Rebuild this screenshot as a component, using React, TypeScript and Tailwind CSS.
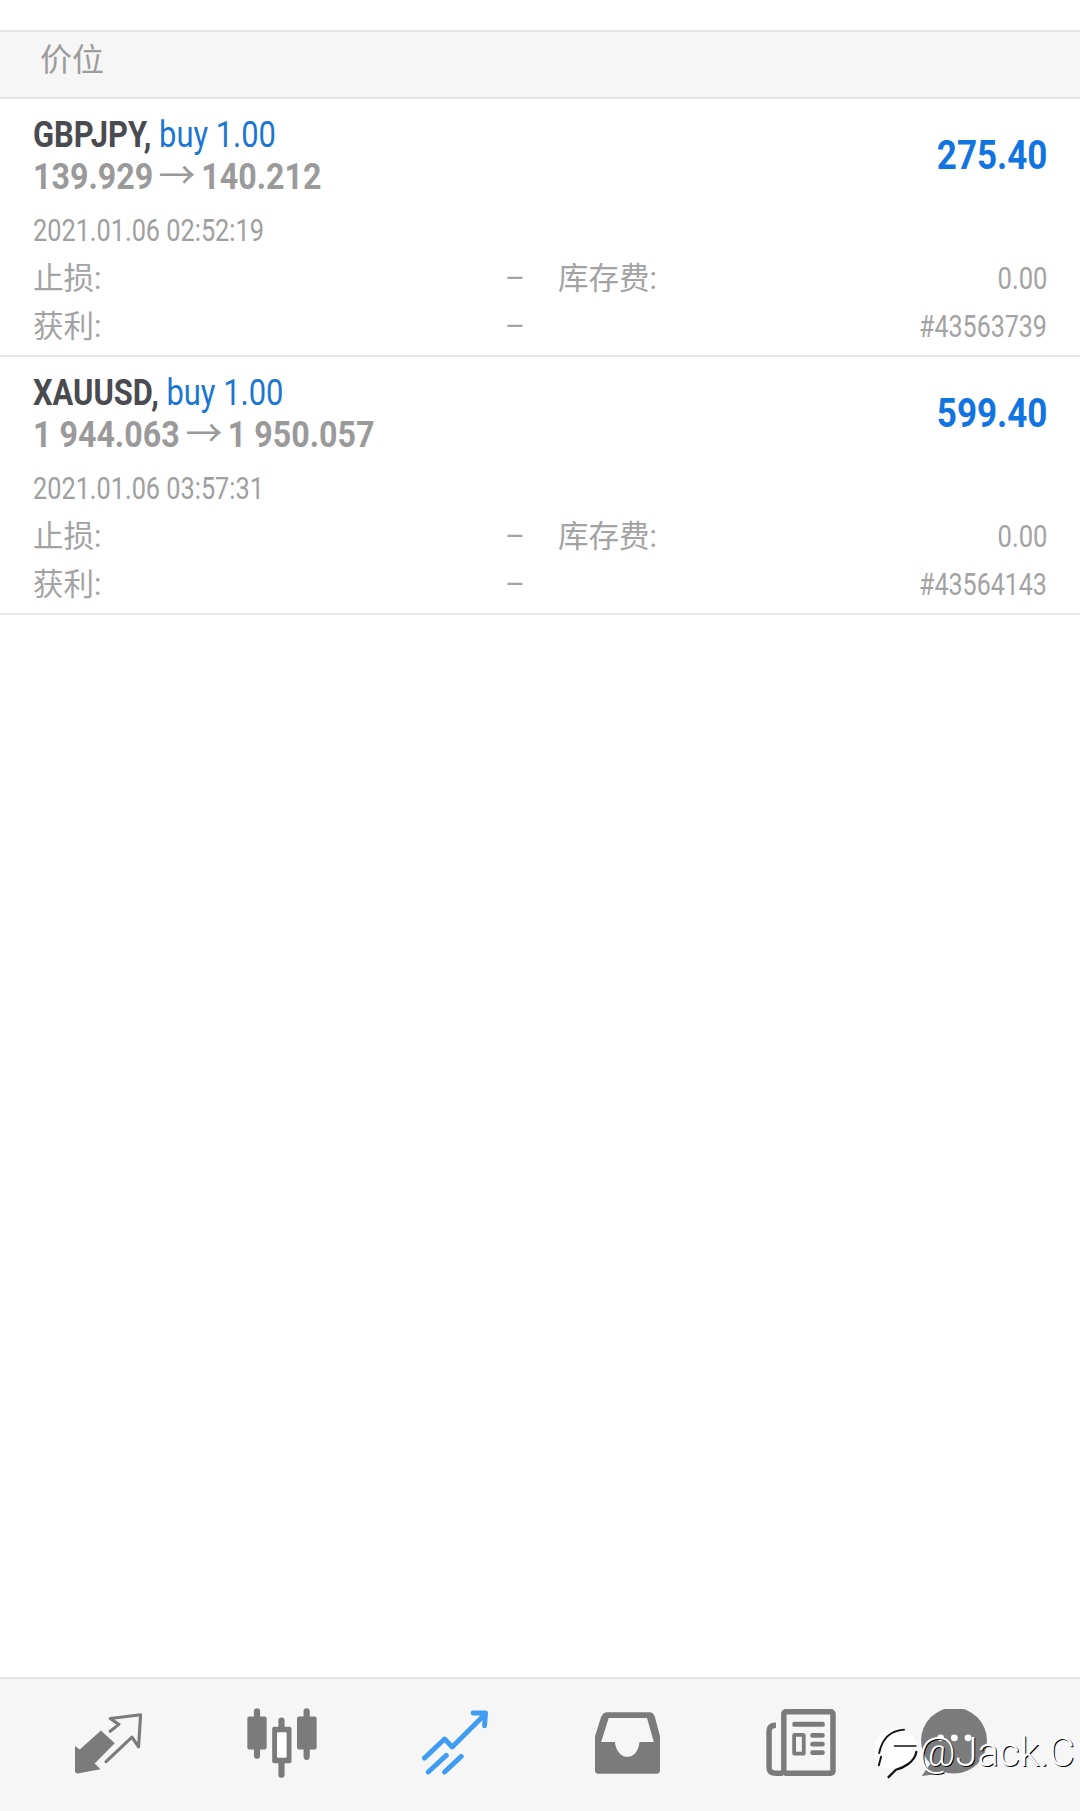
const NAV_GRAY = '#7b7b7b';
const BAR_BG = '#f6f6f6';

const TradeIcon = () => (
  <svg width="67" height="62" viewBox="218 160 194 178">
    <path d="M218 258 L232 268 L293 213 L333 250 L275 308 L292 325 L225 337 Q218 337 218 330 Z" fill={NAV_GRAY} />
    <path d="M308 303 L383 232 L402 260 L408 167 L320 178 L345 195 L320 215" fill="none" stroke={NAV_GRAY} strokeWidth="9" strokeLinejoin="round" strokeLinecap="round" />
  </svg>
);

const CandlesIcon = () => (
  <svg width="70" height="70" viewBox="715 148 203 202">
    <rect x="735" y="148" width="18" height="147" rx="9" fill={NAV_GRAY} />
    <rect x="716" y="172" width="56" height="96" rx="6" fill={NAV_GRAY} />
    <rect x="806" y="175" width="18" height="175" rx="9" fill={NAV_GRAY} />
    <rect x="788" y="202" width="56" height="106" rx="6" fill={NAV_GRAY} />
    <rect x="802" y="218" width="28" height="74" rx="3" fill="#fff" />
    <rect x="879" y="148" width="18" height="150" rx="9" fill={NAV_GRAY} />
    <rect x="860" y="172" width="57" height="96" rx="6" fill={NAV_GRAY} />
  </svg>
);

const PositionsIcon = () => (
  <svg width="66" height="65" viewBox="1225 152 190 186">
    <g fill="none" stroke="#3f9cf3" strokeWidth="14" strokeLinecap="round" strokeLinejoin="round">
      <path d="M1232 290 L1290 235 L1312 258 L1405 165" />
      <path d="M1372 160 L1408 160 L1405 197" />
      <path d="M1243 330 L1295 282" />
      <path d="M1290 330 L1338 285" />
    </g>
  </svg>
);

const InboxIcon = () => (
  <svg width="65" height="62" viewBox="160 155 190 180">
    <path
      fillRule="evenodd"
      fill={NAV_GRAY}
      d="M195 155 H320 Q330 155 335 168 L350 225 V325 Q350 335 340 335 H170 Q160 335 160 325 V225 L178 168 Q185 155 195 155 Z M200 172 H312 L332 242 H290 C285 300 225 300 218 242 H178 Z"
    />
  </svg>
);

const NewsIcon = () => (
  <svg width="70" height="67" viewBox="657 148 202 195">
    <path d="M685 195 Q665 195 665 212 V320 Q665 335 685 335 H705" fill="none" stroke={NAV_GRAY} strokeWidth="16" />
    <rect x="708" y="156" width="143" height="179" rx="6" fill="none" stroke={NAV_GRAY} strokeWidth="16" />
    <rect x="733" y="185" width="94" height="15" rx="5" fill={NAV_GRAY} />
    <rect x="738" y="223" width="28" height="55" rx="2" fill="none" stroke={NAV_GRAY} strokeWidth="11" />
    <rect x="785" y="218" width="42" height="14" rx="6" fill={NAV_GRAY} />
    <rect x="785" y="243" width="42" height="14" rx="6" fill={NAV_GRAY} />
    <rect x="785" y="268" width="42" height="14" rx="6" fill={NAV_GRAY} />
  </svg>
);

const ChatIcon = () => (
  <svg width="66" height="67" viewBox="1103 148 192 195">
    <circle cx="1199" cy="240" r="96" fill={NAV_GRAY} />
    <path d="M1105 343 L1135 300 L1170 335 Z" fill={NAV_GRAY} />
    <circle cx="1160" cy="232" r="10" fill="#fff" />
    <circle cx="1200" cy="232" r="10" fill="#fff" />
    <circle cx="1240" cy="232" r="10" fill="#fff" />
  </svg>
);

const WatermarkLogo = () => (
  <svg width="48" height="52" viewBox="965 215 125 140">
    <circle cx="1030" cy="275" r="58" fill="#fff" opacity="0.9" />
    <g fill="none" stroke="#111" strokeLinecap="round">
      <path d="M985 285 C992 250 1010 225 1052 222" strokeWidth="5" />
      <path d="M990 295 L984 318" strokeWidth="5" />
      <path d="M1026 266 H1084" strokeWidth="4" />
      <path d="M1085 282 C1080 310 1050 325 1030 330 L1010 350" strokeWidth="6" />
    </g>
  </svg>
);

const Trade = ({ symbol, lots, from, to, time, profit, ticket }: {
  symbol: string;
  lots: string;
  from: string;
  to: string;
  time: string;
  profit: string;
  ticket: string;
}) => (
  <div className="h-[258px] border-b-2 border-[#e6e6e6] pt-[16px] pl-[33px] pr-[33px]">
    <div className="flex justify-between">
      <div>
        <div className="h-[40px] leading-[40px] text-[37px] origin-left scale-x-[.835] whitespace-nowrap">
          <span className="font-bold text-[#4a4b50]">{symbol},</span>{' '}
          <span className="text-[#1a76d2]">buy {lots}</span>
        </div>
        <div className="h-[43px] leading-[43px] text-[37px] origin-left scale-x-[.87] font-bold text-[#9a9a9a] whitespace-nowrap">
          {from} <span className="inline-block font-normal scale-x-[1.15]">→</span> {to}
        </div>
      </div>
      <div className="mt-[19px] h-[44px] leading-[44px] text-[40px] font-bold text-[#1274e0] origin-right scale-x-[.875] whitespace-nowrap">
        {profit}
      </div>
    </div>
    <div className="mt-[11px] h-[44px] leading-[44px] text-[31px] text-[#a0a0a0] origin-left scale-x-[.816] whitespace-nowrap">
      {time}
    </div>
    <div className="mt-[2px] flex h-[48px] items-center text-[30.5px] text-[#a3a3a3]">
      <span className="w-[472px]">止损:</span>
      <span className="w-[53px]">–</span>
      <span>库存费:</span>
      <span className="ml-auto origin-right scale-x-[.84]">0.00</span>
    </div>
    <div className="flex h-[48px] items-center text-[30.5px] text-[#a3a3a3]">
      <span className="w-[472px]">获利:</span>
      <span className="w-[53px]">–</span>
      <span className="ml-auto origin-right scale-x-[.82]">{ticket}</span>
    </div>
  </div>
);

export default function App() {
  return (
    <div className="relative flex h-[1811px] w-[1080px] flex-col overflow-hidden bg-white font-['Roboto','Noto_Sans_CJK_SC',sans-serif]">
      <div className="mt-[30px] flex h-[69px] items-center border-y-2 border-[#e6e6e6] bg-[#f6f6f6] pb-[9px] pl-[40px] text-[32px] text-[#9c9c9c]">
        价位
      </div>
      <Trade symbol="GBPJPY" lots="1.00" from="139.929" to="140.212" time="2021.01.06 02:52:19" profit="275.40" ticket="#43563739" />
      <Trade symbol="XAUUSD" lots="1.00" from="1 944.063" to="1 950.057" time="2021.01.06 03:57:31" profit="599.40" ticket="#43564143" />
      <div className="flex-1" />
      {/* Bottom navigation */}
      <div className="flex h-[134px] items-center border-t-2 border-[#e6e6e6] pl-[22px] pb-[5px]" style={{ backgroundColor: BAR_BG }}>
        <div className="flex w-[173px] justify-center"><TradeIcon /></div>
        <div className="flex w-[173px] justify-center"><CandlesIcon /></div>
        <div className="flex w-[173px] justify-center"><PositionsIcon /></div>
        <div className="flex w-[173px] justify-center"><InboxIcon /></div>
        <div className="flex w-[173px] justify-center"><NewsIcon /></div>
        <div className="flex w-[133px] justify-center"><ChatIcon /></div>
      </div>
      {/* Watermark over the nav bar */}
      <div className="absolute left-[871px] top-[1727px] flex items-center">
        <WatermarkLogo />
        <span className="text-[40px] leading-[50px] font-light text-white [text-shadow:1px_1px_0_#000]">@Jack.C</span>
      </div>
    </div>
  );
}
